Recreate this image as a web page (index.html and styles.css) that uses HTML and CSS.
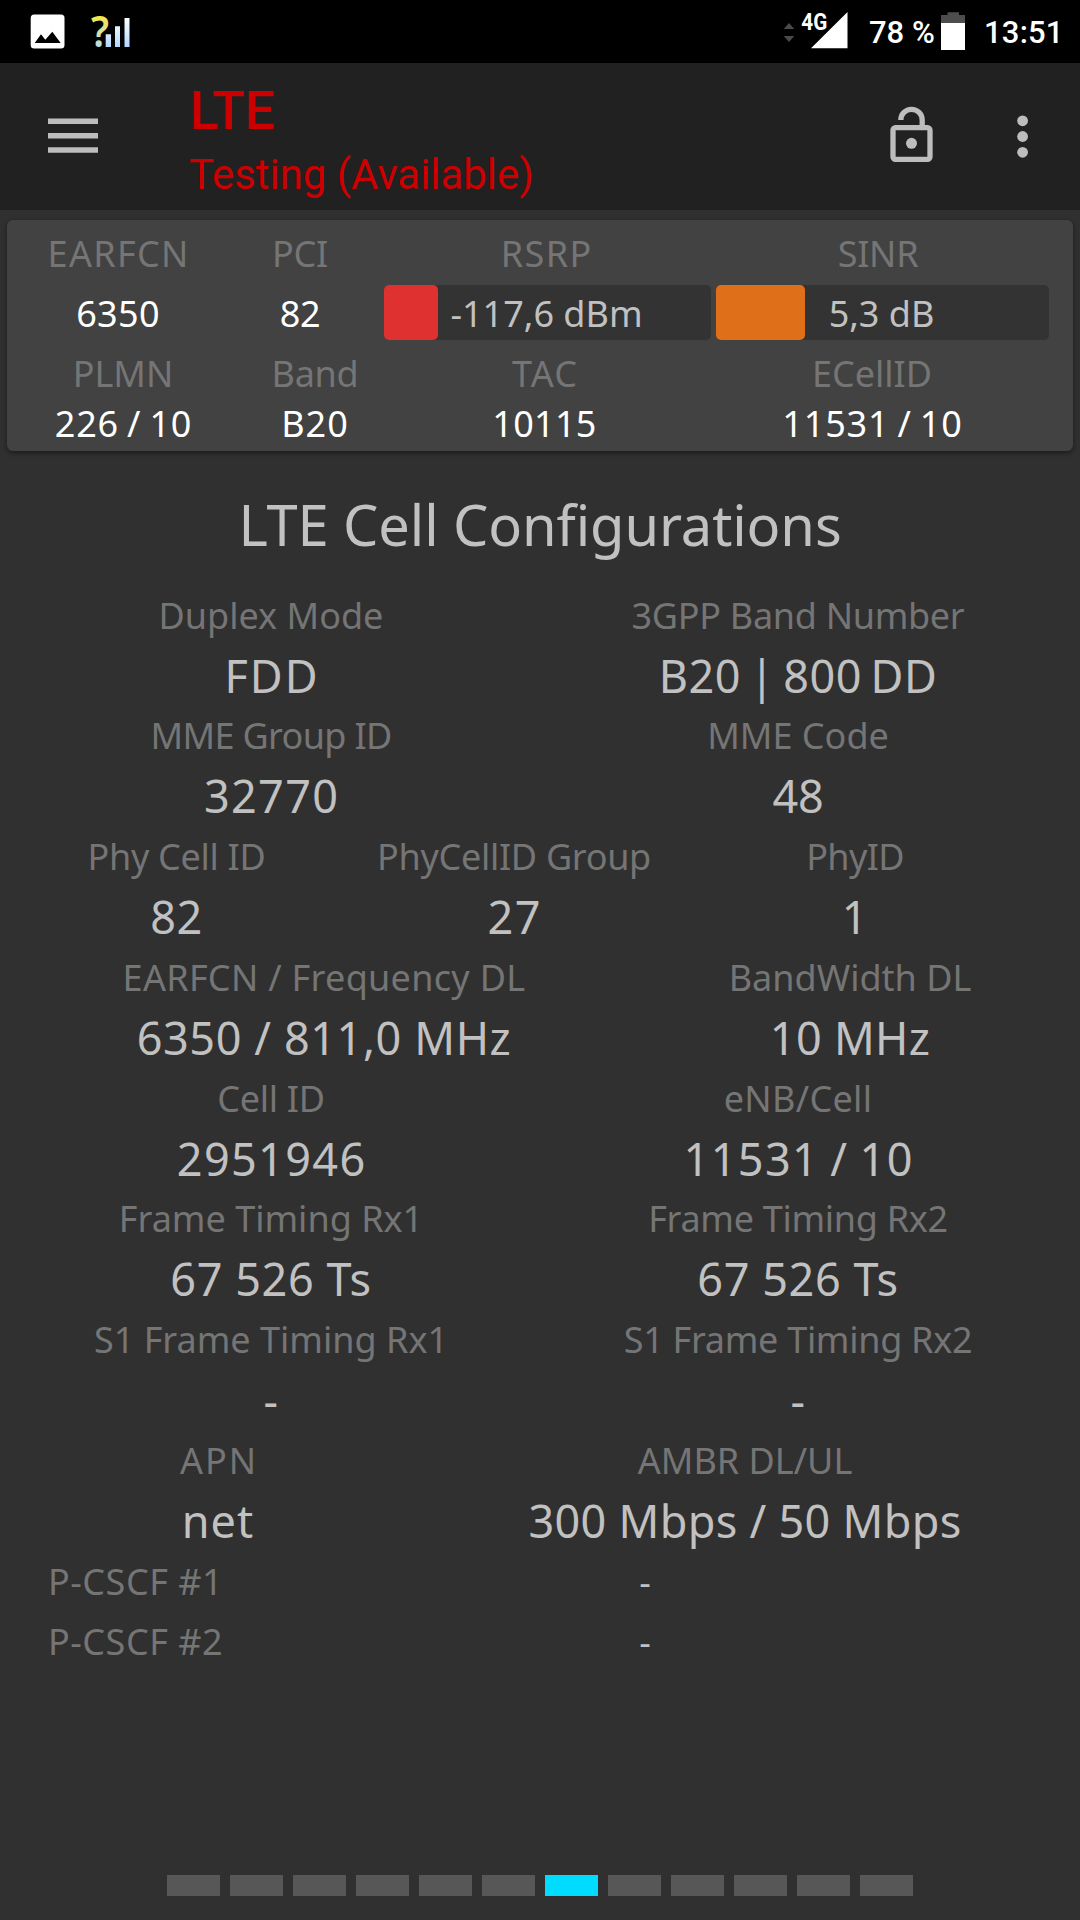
FILE: index.html
```html
<!DOCTYPE html>
<html lang="en">
<head>
<meta charset="utf-8">
<title>LTE Cell Configurations</title>
<link rel="stylesheet" href="styles.css">
</head>
<body>
<div class="status">
  <svg class="notif" viewBox="30 0 102 63" width="102" height="63">
    <defs>
      <linearGradient id="mark" x1="0" y1="0" x2="0" y2="1"><stop offset=".2" stop-color="#ffe82e"/><stop offset=".55" stop-color="#d9dfa0"/><stop offset=".85" stop-color="#b4dcff"/></linearGradient>
      <linearGradient id="bar" x1="0" y1="18" x2="0" y2="47" gradientUnits="userSpaceOnUse"><stop offset="0" stop-color="#fff"/><stop offset="1" stop-color="#b4d8ff"/></linearGradient>
    </defs>
    <rect x="30.7" y="14.5" width="33.8" height="34" rx="3.5" fill="#fff"/>
    <path d="M34.7 43 41 34.3 45.3 39.7 52.3 31.7 60.7 43z" fill="#000"/>
    <text class="question" x="91" y="46.7" textLength="18" lengthAdjust="spacingAndGlyphs" fill="url(#mark)">?</text>
    <path d="M105.7 34.3h5.3V47h-5.3zM115 26.3h5V47h-5zM124.5 18h5V47h-5z" fill="url(#bar)"/>
  </svg>
  <svg class="network" viewBox="780 0 70 63" width="70" height="63">
    <path d="M789 23 794.3 29H783.7zM789 42 783.7 36H794.3z" fill="#4a4a4a"/>
    <path d="M811 48.3H847.5V12z" fill="#fff"/>
    <text class="gen" x="801.3" y="30" textLength="26" lengthAdjust="spacingAndGlyphs">4G</text>
  </svg>
  <span class="percent">78 %</span>
  <svg class="battery" viewBox="941 0 24 63" width="24" height="63">
    <path d="M941 23V15h6.5v-2.7H959V15h6v8z" fill="#4d4d4d"/>
    <path d="M941 23h24v27h-24z" fill="#fff"/>
  </svg>
  <span class="clock">13:51</span>
</div>

<header class="appbar">
  <svg class="menu" viewBox="48 63 50 147" width="50" height="147">
    <path d="M48 118.5h50v5.6H48zM48 133h50v5.6H48zM48 147.2h50v5.6H48z" fill="#bdbdbd"/>
  </svg>
  <div class="heading">
    <div class="tech">LTE</div>
    <div class="state">Testing (Available)</div>
  </div>
  <svg class="actions" viewBox="885 63 150 147" width="150" height="147" fill="none" stroke="#bdbdbd" stroke-width="5.3">
    <path d="M900.8 120a10.7 10.7 0 0 1 21.4 0v7"/>
    <rect x="893" y="127.7" width="37" height="31.6" rx="2.5"/>
    <g fill="#bdbdbd" stroke="none"><circle cx="911.5" cy="143.3" r="5.5"/>
    <circle cx="1022.6" cy="120.8" r="5.4"/><circle cx="1022.6" cy="136.5" r="5.4"/><circle cx="1022.6" cy="152.3" r="5.4"/></g>
  </svg>
</header>

<section class="card">
  <div class="signal">
    <span class="label airy">EARFCN</span><span class="label snug">PCI</span><span class="label airy rsrp">RSRP</span><span class="label snug sinr">SINR</span>
  </div>
  <div class="signal meters">
    <span class="num loose">6350</span><span class="num snug">82</span>
    <div class="meter"><i class="fill low" style="width:16.6%"></i><b>-117,6 dBm</b></div>
    <div class="meter"><i class="fill fair" style="width:26.7%"></i><b>5,3 dB</b></div>
  </div>
  <div class="network-ids">
    <span class="label">PLMN</span><span class="label snug">Band</span><span class="label airy">TAC</span><span class="label">ECellID</span>
    <span class="num pair">226 / 10</span><span class="num open">B20</span><span class="num loose">10115</span><span class="num pair">11531 / 10</span>
  </div>
</section>

<main>
  <h1>LTE Cell Configurations</h1>
  <div class="row">
    <span class="label">Duplex Mode</span><span class="label snug">3GPP Band Number</span>
    <span class="value spread">FDD</span><span class="value piped">B20 | 800 DD</span>
  </div>
  <div class="row">
    <span class="label tight">MME Group ID</span><span class="label">MME Code</span>
    <span class="value airy">32770</span><span class="value snug">48</span>
  </div>
  <div class="row thirds">
    <span class="label snug">Phy Cell ID</span><span class="label snug">PhyCellID Group</span><span class="label tight">PhyID</span>
    <span class="value">82</span><span class="value airy">27</span><span class="value">1</span>
  </div>
  <div class="row wide-left">
    <span class="label loose">EARFCN / Frequency DL</span><span class="label">BandWidth DL</span>
    <span class="value">6350 / 811,0 MHz</span><span class="value loose">10 MHz</span>
  </div>
  <div class="row">
    <span class="label snug">Cell ID</span><span class="label loose">eNB/Cell</span>
    <span class="value airy">2951946</span><span class="value wide-pair">11531 / 10</span>
  </div>
  <div class="row">
    <span class="label">Frame Timing Rx1</span><span class="label snug">Frame Timing Rx2</span>
    <span class="value">67 526 Ts</span><span class="value">67 526 Ts</span>
  </div>
  <div class="row">
    <span class="label">S1 Frame Timing Rx1</span><span class="label snug">S1 Frame Timing Rx2</span>
    <span class="value">-</span><span class="value">-</span>
  </div>
  <div class="row wide-right">
    <span class="label spread">APN</span><span class="label">AMBR DL/UL</span>
    <span class="value open">net</span><span class="value loose">300 Mbps / 50 Mbps</span>
  </div>
  <div class="server"><span class="label">P-CSCF #1</span><span class="num dash">-</span></div>
  <div class="server"><span class="label">P-CSCF #2</span><span class="num dash">-</span></div>
</main>

<nav class="pager"><i></i><i></i><i></i><i></i><i></i><i></i><i class="active"></i><i></i><i></i><i></i><i></i><i></i></nav>
</body>
</html>
```
FILE: styles.css
```css
* { box-sizing: border-box; }

body {
  margin: 0;
  width: 1080px;
  height: 1920px;
  display: flex;
  flex-direction: column;
  overflow: hidden;
  background: #303030;
  font: 36px/60px "Noto Sans", "Open Sans", sans-serif;
  color: #c1c1c1;
}

svg { display: block; flex: none; }

/* Android status bar */
.status {
  height: 63px;
  display: flex;
  background: #000;
  color: #fff;
  font: 500 31px/65px Roboto, sans-serif;
  white-space: nowrap;
}
.notif { margin-left: 30px; }
.question { font: 600 44px "Noto Sans", sans-serif; }
.network { margin-left: 648px; }
.gen { font: 700 23.5px Roboto, sans-serif; fill: #fff; }
.percent { width: 72px; margin-left: 19px; }
.clock { margin-left: 19px; letter-spacing: .2px; }

/* App bar */
.appbar {
  height: 147px;
  display: flex;
  background: #212121;
  color: #c00;
  font-family: Roboto, sans-serif;
}
.menu { margin-left: 48px; }
.heading { width: 696px; margin-left: 91px; padding-top: 17px; }
.tech { font-size: 53.5px; line-height: 62px; font-weight: 500; margin-left: 1px; }
.state { font-size: 41.9px; line-height: 66px; }

/* Serving cell summary */
.card {
  height: 231px;
  margin: 10px 7px 0;
  padding: 12px 0 0 13px;
  border-radius: 6px;
  background: #424242;
  box-shadow: 0 2px 5px rgba(0, 0, 0, .45);
  line-height: 44px;
  text-align: center;
}
.signal {
  display: grid;
  grid-template-columns: 196px 168px 327px 333px;
  height: 44px;
}
.signal > :nth-child(4) { margin-left: 5px; margin-right: -5px; }
.signal > .rsrp { margin-right: 3px; }
.signal > .sinr { margin-right: 4px; }
.meters {
  grid-template-rows: 55px;
  height: 55px;
  margin: 9px 0 12px;
  line-height: 57px;
}
.meter { position: relative; border-radius: 5px; background: #333; }
.fill { position: absolute; left: 0; top: 0; height: 100%; border-radius: 5px; }
.low { background: #e03131; }
.fair { background: #e06f19; }
.meter b { position: relative; left: -1px; font-weight: 400; }
.network-ids {
  display: grid;
  grid-template-columns: 206px 178px 281px 374px;
  grid-template-rows: 50px 44px;
}

.label { color: #757575; }
.num { color: #fff; }

/* Cell configuration table */
h1 {
  margin: 13px 0 0;
  font-size: 56px;
  line-height: 121.5px;
  font-weight: 400;
  letter-spacing: -.1px;
  text-align: center;
}
.row {
  display: grid;
  grid-template-columns: 526px 528px;
  grid-template-rows: 60px 60.75px;
  padding-left: 8px;
  text-align: center;
}
.thirds { grid-template-columns: 337px 338px 344px; }
.wide-left { grid-template-columns: 632px 420px; }
.wide-right { grid-template-columns: 420px 634px; }
.value { font-size: 45px; letter-spacing: .6px; }
.server {
  display: grid;
  grid-template-columns: 182px 830px;
  padding-left: 48px;
}
.dash { color: #c1c1c1; text-align: center; }
.server .label { letter-spacing: .5px; }

/* Letter spacing steps */
.tight { letter-spacing: -.65px; }
.snug { letter-spacing: -.3px; }
.loose { letter-spacing: .3px; }
.open { letter-spacing: 1px; }
.airy { letter-spacing: 1.35px; text-indent: 1.35px; }
.spread { letter-spacing: 2px; text-indent: 2px; }
.pair { letter-spacing: .8px; word-spacing: -2px; text-indent: 1px; }
.wide-pair { letter-spacing: 1.4px; word-spacing: -2px; text-indent: 1.4px; }
.piped { letter-spacing: .6px; word-spacing: -4px; }

/* Page indicator */
.pager {
  display: flex;
  justify-content: center;
  gap: 10px;
  margin: auto 0 24px;
}
.pager i { width: 53px; height: 21px; background: #575757; }
.pager .active { background: #00dcff; }
```
